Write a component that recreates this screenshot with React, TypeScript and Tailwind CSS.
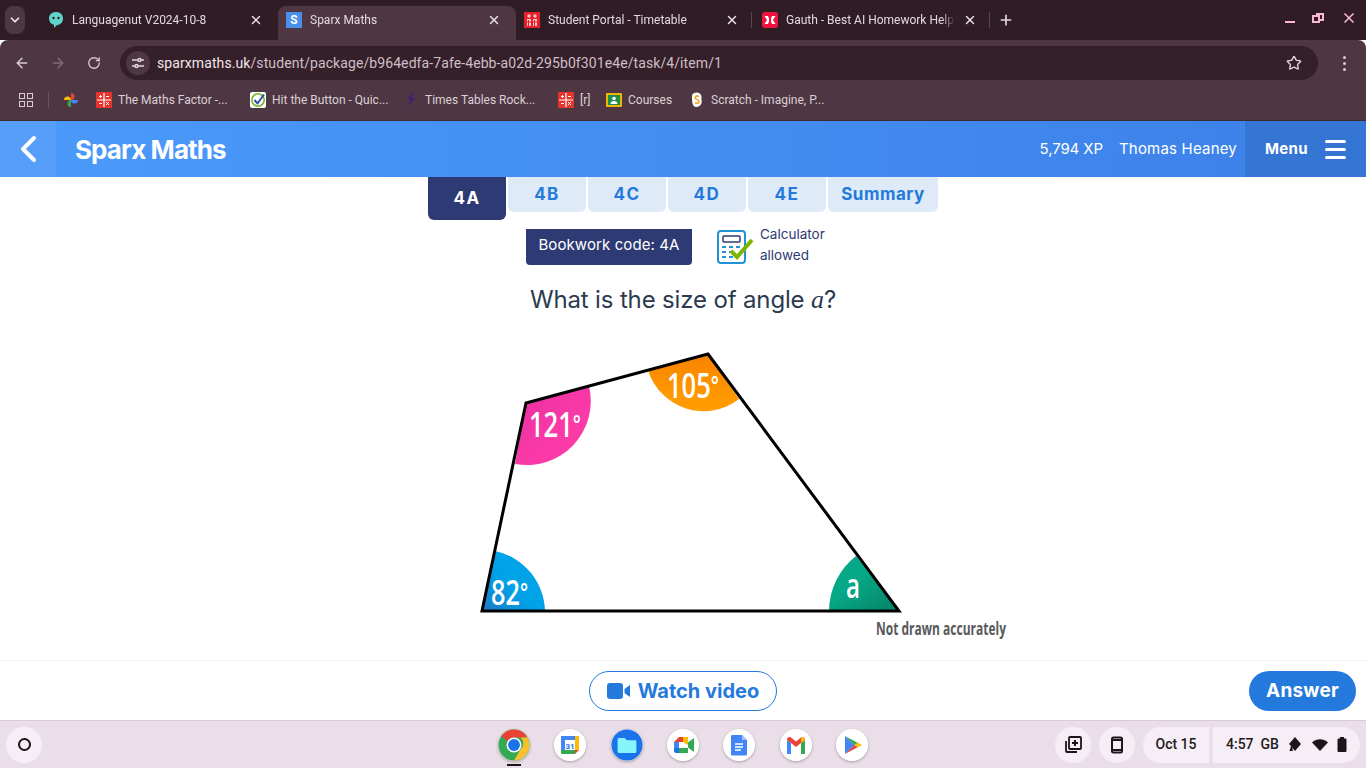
import React from "react";
import { ArrowLeft, ArrowRight, ChevronDown, Plus, RotateCw, Star, X } from "lucide-react";

const roboto = "font-['Roboto',sans-serif]";
const dm = "font-['Inter',sans-serif]";

const LangIcon = () => (
  <svg width="16" height="18" viewBox="0 0 16 18">
    <path d="M8 1c4 0 7 2.600 7 6.500S12 14 9 14l-3 3v-3.300C3 13 1 11 1 7.500 1 3.600 4 1 8 1z" fill="#5fd3c8" />
    <circle cx="5.500" cy="7" r="1.200" fill="#2f1c25" />
    <circle cx="10.500" cy="7" r="1.200" fill="#2f1c25" />
  </svg>
);

const SparxIcon = () => (
  <div className="flex h-4 w-4 items-center justify-center bg-[#4a90e8] text-[12px] font-bold text-white">S</div>
);

const PortalIcon = () => (
  <svg width="16" height="16" viewBox="0 0 16 16">
    <rect width="16" height="16" fill="#e8202c" />
    <circle cx="5" cy="4" r="1.700" fill="#f6c6c6" />
    <circle cx="11" cy="4" r="1.700" fill="#f6c6c6" />
    <path d="M3 7h4v7H3zM9 7h4v7H9z" fill="#f6c6c6" />
    <path d="M4.500 8v6M10.500 8v6M3 10h4M9 10h4" stroke="#e8202c" />
  </svg>
);

const GauthIcon = () => (
  <svg width="16" height="16" viewBox="0 0 16 16">
    <rect width="16" height="16" rx="3" fill="#f0123f" />
    <path d="M2.500 4h3.500l1 2.500V9.500L6 12H2.500l2.500-4zM13.500 4H10L9 6.500v3l1 2.500h3.500L11 8z" fill="#fff" />
  </svg>
);

const MathsFactorIcon = () => (
  <svg width="16" height="16" viewBox="0 0 16 16">
    <rect width="16" height="16" rx="1" fill="#e8342c" />
    <path d="M1 8h14M8 1v14" stroke="#fff" strokeWidth="1.200" />
    <path d="M3 4.500h3M4.500 3v3M10 4.500h3M3 11.500h3M10 10l3 3M13 10l-3 3" stroke="#fff" />
  </svg>
);

const tabs = [
  { title: "Languagenut V2024-10-8", icon: <LangIcon />, active: false, divider: false },
  { title: "Sparx Maths", icon: <SparxIcon />, active: true, divider: false },
  { title: "Student Portal - Timetable", icon: <PortalIcon />, active: false, divider: true },
  { title: "Gauth - Best AI Homework Help", icon: <GauthIcon />, active: false, divider: false },
];

const bookmarks = [
  { label: "The Maths Factor -...", width: "w-[154px]", icon: <MathsFactorIcon /> },
  {
    label: "Hit the Button - Quic...",
    width: "w-[153px]",
    icon: (
      <svg width="16" height="16" viewBox="0 0 16 16">
        <rect width="16" height="16" rx="2" fill="#fff" />
        <circle cx="8" cy="8" r="6.200" fill="none" stroke="#7cb02c" strokeWidth="1.600" />
        <path d="M4.500 8l3 3.500L14 2.500" fill="none" stroke="#2a4fa8" strokeWidth="2" />
      </svg>
    ),
  },
  {
    label: "Times Tables Rock...",
    width: "w-[155px]",
    icon: (
      <svg width="16" height="16" viewBox="0 0 16 16">
        <path d="M11 0L4 6l4 1.500L3 16l9-9.500-4-1z" fill="#3d1d78" />
      </svg>
    ),
  },
  { label: "[r]", width: "w-[48px]", icon: <MathsFactorIcon /> },
  {
    label: "Courses",
    width: "w-[83px]",
    icon: (
      <svg width="16" height="16" viewBox="0 0 16 16">
        <rect x="0" y="1" width="16" height="14" rx="1" fill="#f4b400" />
        <rect x="2" y="3" width="12" height="10" fill="#1f8e4d" />
        <circle cx="8" cy="6.500" r="1.800" fill="#fff" />
        <path d="M4.500 12c0-2 1.500-3 3.500-3s3.500 1 3.500 3z" fill="#fff" />
      </svg>
    ),
  },
  {
    label: "Scratch - Imagine, P...",
    width: "w-[140px]",
    icon: (
      <svg width="16" height="16" viewBox="0 0 16 16">
        <path d="M5 1c3-1.200 6-.5 7 2 .8 2 .3 3.500.6 5.500.4 3-1 6-4.600 6.500C5 15.400 3.500 13 3.300 10 3 7 2 2.200 5 1z" fill="#fff" />
        <path d="M10 4.500C8.500 3.500 6 4 6.300 6c.3 1.800 3.500 1.500 3.700 3.500.2 1.800-2.300 2.300-4 1.200" fill="none" stroke="#f6a21e" strokeWidth="1.600" />
      </svg>
    ),
  },
];

const lessons = ["4B", "4C", "4D", "4E"];

const CalculatorIcon = () => (
  <svg width="38" height="34" viewBox="0 0 38 34">
    <rect x="1" y="1" width="27" height="32" rx="3" fill="#fff" stroke="#1f93d6" strokeWidth="2" />
    <rect x="6" y="6" width="17" height="6" rx="1" fill="#fff" stroke="#2e3a73" strokeWidth="1.500" />
    <path d="M5 17h4M12 17h4M19 17h4M5 22h4M12 22h4M5 27h4M12 27h4" stroke="#1f93d6" strokeWidth="2" />
    <path d="M14 21l6 6L35 10" fill="none" stroke="#7db500" strokeWidth="4" />
  </svg>
);

const Diagram = () => (
  <svg width="560" height="315" viewBox="470 340 560 315" className="block">
    <defs>
      <linearGradient id="blue" x1="0" y1="1" x2="1" y2="0">
        <stop offset="0" stopColor="#1e78c8" />
        <stop offset="0.45" stopColor="#00a3e8" />
      </linearGradient>
      <linearGradient id="green" x1="1" y1="1" x2="0" y2="0">
        <stop offset="0" stopColor="#068266" />
        <stop offset="0.6" stopColor="#06a987" />
      </linearGradient>
      <linearGradient id="orange" x1="0.6" y1="0" x2="0.5" y2="1">
        <stop offset="0" stopColor="#f98200" />
        <stop offset="0.8" stopColor="#ff9a00" />
      </linearGradient>
      <linearGradient id="pink" x1="0" y1="0" x2="1" y2="1">
        <stop offset="0" stopColor="#e72ea0" />
        <stop offset="0.6" stopColor="#fb3aa8" />
      </linearGradient>
    </defs>
    <path d="M482 611L545 611A63 63 0 0 0 495 551Z" fill="url(#blue)" />
    <path d="M899 611L829 611A70 70 0 0 1 856 556Z" fill="url(#green)" />
    <path d="M526 403L589 386A64 64 0 0 1 515 464Z" fill="url(#pink)" />
    <path d="M708 354L648 370A58 58 0 0 0 739 399Z" fill="url(#orange)" />
    <path d="M482 611L526 403L708 354L899 611Z" fill="none" stroke="#000" strokeWidth="3" />
    <g fill="#fff" fontFamily="'Open Sans',sans-serif" fontWeight="600" fontSize="35">
      <text x="529" y="437" textLength="52" lengthAdjust="spacingAndGlyphs">
        121<tspan fontSize="26" dy="-4">°</tspan>
      </text>
      <text x="667" y="398" textLength="52" lengthAdjust="spacingAndGlyphs">
        105<tspan fontSize="26" dy="-4">°</tspan>
      </text>
      <text x="491" y="605" textLength="37" lengthAdjust="spacingAndGlyphs">
        82<tspan fontSize="26" dy="-4">°</tspan>
      </text>
      <text x="846" y="598" textLength="14" lengthAdjust="spacingAndGlyphs">a</text>
    </g>
    <text x="876" y="635" fill="#58595b" fontFamily="'Open Sans',sans-serif" fontWeight="700" fontSize="17" textLength="130" lengthAdjust="spacingAndGlyphs">
      Not drawn accurately
    </text>
  </svg>
);

const apps = [
  <svg key="chrome" width="34" height="34" viewBox="0 0 34 34">
    <circle cx="17" cy="17" r="16.500" fill="#34a853" />
    <path d="M17 .5A16.500 16.500 0 0 1 31.300 9H17a8 8 0 0 0-7 4L3.500 7.500A16.500 16.500 0 0 1 17 .5z" fill="#ea4335" />
    <path d="M31.300 9A16.500 16.500 0 0 1 17 33.500l7-12a8 8 0 0 0 0-12.500z" fill="#fbc02d" />
    <circle cx="17" cy="17" r="8" fill="#fff" />
    <circle cx="17" cy="17" r="6.300" fill="#1a73e8" />
  </svg>,
  <svg key="calendar" width="32" height="32" viewBox="0 0 32 32">
    <circle cx="16" cy="16" r="16" fill="#fff" />
    <rect x="7" y="7" width="18" height="18" rx="1" fill="#fff" />
    <path d="M7 7h18v4H11v10H7z" fill="#4285f4" />
    <path d="M21 7h4v14h-4z" fill="#fbbc04" />
    <path d="M7 21h14v4H8a1 1 0 0 1-1-1z" fill="#34a853" />
    <path d="M21 21h4l-4 4z" fill="#ea4335" />
    <text x="16" y="19.500" textAnchor="middle" fontSize="8" fontWeight="700" fill="#1a73e8" fontFamily="Roboto,sans-serif">31</text>
  </svg>,
  <svg key="files" width="34" height="34" viewBox="0 0 34 34">
    <circle cx="17" cy="17" r="16.500" fill="#1a73e8" />
    <path d="M7 11a1.500 1.500 0 0 1 1.500-1.500h6l2.500 2.500h9.500A1.500 1.500 0 0 1 27 13.500V24a1.500 1.500 0 0 1-1.500 1.500h-17A1.500 1.500 0 0 1 7 24z" fill="#85f5fb" />
  </svg>,
  <svg key="meet" width="32" height="32" viewBox="0 0 32 32">
    <circle cx="16" cy="16" r="16" fill="#fff" />
    <path d="M7 13l5-5h9v5H12v6H7z" fill="#ea4335" />
    <path d="M7 13h5v6H7z" fill="#4285f4" />
    <path d="M7 19h5v5H9a2 2 0 0 1-2-2z" fill="#1a73e8" />
    <path d="M12 19h9v5H12z" fill="#34a853" />
    <path d="M16 8h5v8l-5-3z" fill="#fbbc04" />
    <path d="M21 13.500l6-4.500v14l-6-4.500z" fill="#34a853" />
  </svg>,
  <svg key="docs" width="32" height="32" viewBox="0 0 32 32">
    <circle cx="16" cy="16" r="16" fill="#fff" />
    <path d="M9 6h10l5 5v14a1.500 1.500 0 0 1-1.500 1.500h-13A1.500 1.500 0 0 1 8 25V7.500A1.500 1.500 0 0 1 9 6z" fill="#4285f4" />
    <path d="M19 6l5 5h-5z" fill="#a1c2fa" />
    <path d="M12 15h8M12 18h8M12 21h6" stroke="#fff" strokeWidth="1.500" />
  </svg>,
  <svg key="gmail" width="32" height="32" viewBox="0 0 32 32">
    <circle cx="16" cy="16" r="16" fill="#fff" />
    <path d="M7 25V11l4 3v11z" fill="#4285f4" />
    <path d="M25 25V11l-4 3v11z" fill="#34a853" />
    <path d="M7 11c0-3 2.500-3.500 4-2.500l5 4 5-4c1.500-1 4-.5 4 2.500l-4 3-5 4-5-4z" fill="#ea4335" />
    <path d="M21 8.500c1.500-1 4-.5 4 2.500l-4 3z" fill="#fbbc04" />
  </svg>,
  <svg key="play" width="32" height="32" viewBox="0 0 32 32">
    <circle cx="16" cy="16" r="16" fill="#fff" />
    <path d="M9 7l9.500 9L9 25z" fill="#4285f4" />
    <path d="M9 7l13 7-3.500 2z" fill="#34a853" />
    <path d="M9 25l13-7-3.500-2z" fill="#ea4335" />
    <path d="M21.500 13.500L26 16l-4.500 2.500L18.500 16z" fill="#fbbc04" />
  </svg>,
];

const App: React.FC = () => {
  return (
    <div className="flex h-[768px] w-[1366px] flex-col overflow-hidden bg-white">
      {/* Tab strip */}
      <div className={`flex h-10 shrink-0 items-center bg-[#2f1c25] text-[12px] text-[#e4d8de] ${roboto}`}>
        <div className="ml-[5px] mr-[15px] flex h-7 w-5 items-center justify-center rounded-lg bg-[#4e3742]">
          <ChevronDown size={14} strokeWidth={3} color="#f0e6ea" />
        </div>
        {tabs.map((tab) => (
          <div
            key={tab.title}
            className={`relative flex h-[34px] w-[238px] items-center self-end pb-[6px] pl-2 pr-[15px] ${
              tab.active ? "rounded-t-lg bg-[#4e3742]" : ""
            }`}
          >
            <div className="flex w-4 shrink-0 justify-center">{tab.icon}</div>
            <span className="ml-2 flex-1 overflow-hidden whitespace-nowrap [mask-image:linear-gradient(to_right,black_92%,transparent)]">
              {tab.title}
            </span>
            <X size={14} strokeWidth={2.5} color="#eadfe4" className="ml-2 shrink-0" />
            {tab.divider && <div className="absolute right-[2px] top-[6px] h-4 w-px bg-[#5c4652]" />}
          </div>
        ))}
        <div className="ml-[-3px] h-4 w-px bg-[#5c4652]" />
        <Plus size={16} strokeWidth={2.5} color="#e4d8de" className="ml-[8px]" />
        <div className="ml-auto mr-[9px] flex items-center gap-[17px]">
          <div className="mt-1 h-[2px] w-[10px] bg-[#f8b8d4]" />
          <div className="relative mb-1 h-[10px] w-3">
            <div className="absolute right-0 top-0 h-2 w-2 border-2 border-[#f8b8d4]" />
            <div className="absolute bottom-0 left-0 h-2 w-2 border-2 border-[#f8b8d4] bg-[#2f1c25]" />
          </div>
          <X size={16} strokeWidth={2.5} color="#f8b8d4" className="mb-1" />
        </div>
      </div>

      {/* Toolbar */}
      <div className={`h-[81px] shrink-0 rounded-t-lg border-b border-[#3d2b34] bg-[#4e3742] ${roboto}`}>
        <div className="flex h-10 items-end pl-[14px]">
          <div className="flex h-[34px] items-center">
            <ArrowLeft size={16} strokeWidth={2.2} color="#d9ccd3" />
            <ArrowRight size={16} strokeWidth={2.2} color="#826e78" className="ml-5" />
            <RotateCw size={14} strokeWidth={2.2} color="#d9ccd3" className="ml-[21px]" />
          </div>
          <div className="ml-[19px] flex h-[34px] w-[1198px] items-center rounded-full bg-[#35202a] pl-[6px] pr-[16px]">
            <div className="flex h-6 w-6 items-center justify-center rounded-full bg-[#4e3742]">
              <svg width="14" height="14" viewBox="0 0 14 14" fill="none" stroke="#e4d8de" strokeWidth="1.400">
                <path d="M1 4h6M10 4h3M1 10h3M7 10h6" />
                <circle cx="8.500" cy="4" r="1.500" />
                <circle cx="5.500" cy="10" r="1.500" />
              </svg>
            </div>
            <span className="ml-[7px] text-[14px] tracking-[0.09px] text-[#f0e6ea]">
              sparxmaths.uk<span className="text-[#cdbfc7]">/student/package/b964edfa-7afe-4ebb-a02d-295b0f301e4e/task/4/item/1</span>
            </span>
            <Star size={16} strokeWidth={2} color="#e4d8de" className="ml-auto" />
          </div>
          <div className="ml-[25px] flex h-[34px] flex-col items-center justify-center gap-[3px]">
            <div className="h-[3px] w-[3px] rounded-full bg-[#d9ccd3]" />
            <div className="h-[3px] w-[3px] rounded-full bg-[#d9ccd3]" />
            <div className="h-[3px] w-[3px] rounded-full bg-[#d9ccd3]" />
          </div>
        </div>
        <div className="flex h-10 items-center pl-[19px] text-[12px] text-[#dccfd6]">
          <div className="grid h-[14px] w-[14px] grid-cols-2 gap-[2px]">
            <div className="border-[1.5px] border-[#d9ccd3]" />
            <div className="border-[1.5px] border-[#d9ccd3]" />
            <div className="border-[1.5px] border-[#d9ccd3]" />
            <div className="border-[1.5px] border-[#d9ccd3]" />
          </div>
          <div className="ml-[15px] h-4 w-px bg-[#6a5460]" />
          <svg width="16" height="16" viewBox="0 0 16 16" className="ml-[14px] mr-[17px]">
            <path d="M8 8H1a3.500 3.500 0 0 1 7 0z" fill="#fbbc04" />
            <path d="M8 8H1a3.500 3.500 0 0 1 7 0z" fill="#ea4335" transform="rotate(90 8 8)" />
            <path d="M8 8H1a3.500 3.500 0 0 1 7 0z" fill="#4285f4" transform="rotate(180 8 8)" />
            <path d="M8 8H1a3.500 3.500 0 0 1 7 0z" fill="#34a853" transform="rotate(270 8 8)" />
          </svg>
          {bookmarks.map((b) => (
            <div key={b.label} className={`flex items-center gap-[6px] whitespace-nowrap ${b.width}`}>
              <div className="w-4 shrink-0">{b.icon}</div>
              <span>{b.label}</span>
            </div>
          ))}
        </div>
      </div>

      {/* Sparx header */}
      <div className={`flex h-14 shrink-0 items-center bg-gradient-to-r from-[#4b9afa] to-[#3c80e8] text-white ${dm}`}>
        <div className="flex h-full w-14 items-center justify-center bg-[#559ffb]">
          <svg width="20" height="28" viewBox="0 0 20 28" fill="none" stroke="#fff" strokeWidth="4" strokeLinecap="round" strokeLinejoin="round">
            <path d="M16 3L5 14l11 11" />
          </svg>
        </div>
        <span className="ml-[19px] text-[26px] font-bold tracking-[-0.9px]">Sparx Maths</span>
        <span className="ml-auto text-[15px] tracking-[-0.1px]">5,794 XP</span>
        <span className="ml-4 text-[15px] tracking-[0.2px]">Thomas Heaney</span>
        <div className="ml-2 flex h-full w-[121px] items-center bg-[#3575d3] pl-5">
          <span className="text-[15px] font-bold tracking-[0.3px]">Menu</span>
          <div className="ml-[17px] flex w-[21px] flex-col gap-[5px]">
            <div className="h-[3px] rounded-full bg-white" />
            <div className="h-[3px] rounded-full bg-white" />
            <div className="h-[3px] rounded-full bg-white" />
          </div>
        </div>
      </div>

      {/* Question */}
      <div className={`flex min-h-0 flex-1 flex-col items-center ${dm}`}>
        <div className="flex h-[43px] w-[510px] shrink-0 items-start gap-[2px]">
          <div className="flex h-[43px] w-[78px] items-center justify-center rounded-b-md bg-[#2e3a73] text-[17px] font-bold tracking-[1.5px] text-white">
            4A
          </div>
          {lessons.map((l) => (
            <div key={l} className="flex h-[35px] w-[78px] items-center justify-center rounded-b-md bg-[#deeaf7] text-[17px] font-bold tracking-[1.5px] text-[#2479dc]">
              {l}
            </div>
          ))}
          <div className="flex h-[35px] w-[110px] items-center justify-center rounded-b-md bg-[#deeaf7] text-[17px] font-bold tracking-[0.5px] text-[#2479dc]">
            Summary
          </div>
        </div>
        <div className="mt-[9px] flex h-9 w-[314px] shrink-0 items-center">
          <div className="flex h-9 w-[166px] items-center justify-center rounded-b-sm bg-[#2e3a73] pb-1 text-[15px] tracking-[0.1px] text-white">
            Bookwork code: 4A
          </div>
          <div className="ml-[25px] w-[36px]">
            <CalculatorIcon />
          </div>
          <div className="mb-1 ml-[7px] text-[13.500px] leading-[21px] text-[#2e3a73]">
            Calculator
            <br />
            allowed
          </div>
        </div>
        <p className="mt-[19px] text-[24px] leading-[32px] tracking-[-0.15px] text-[#2c3a50]">
          What is the size of angle <span className="font-['Liberation_Serif',serif] text-[26px] italic">a</span>?
        </p>
        <div className="ml-[470px] mt-[24px] self-start">
          <Diagram />
        </div>
      </div>

      {/* Footer actions */}
      <div className={`grid h-[60px] shrink-0 grid-cols-3 items-center border-t border-[#eef4fb] ${dm}`}>
        <div />
        <div className="flex h-10 w-[188px] items-center justify-center gap-2 justify-self-center rounded-full border border-[#2479dc] pt-[1px] text-[20px] font-bold text-[#2479dc]">
          <svg width="23" height="16" viewBox="0 0 23 16">
            <rect width="16" height="16" rx="3" fill="#2479dc" />
            <path d="M17.500 6L23 2v12l-5.500-4z" fill="#2479dc" />
          </svg>
          Watch video
        </div>
        <div className="mr-[10px] flex h-10 w-[107px] items-center justify-center justify-self-end rounded-full bg-[#2479dc] pt-[2px] text-[19px] font-bold tracking-[0.2px] text-white">
          Answer
        </div>
      </div>

      {/* ChromeOS shelf */}
      <div className={`grid h-12 shrink-0 grid-cols-[1fr_auto_1fr] items-center border-t border-[#d6ccd5] bg-[#eadfe9] text-[14px] font-medium text-[#241a20] ${roboto}`}>
        <div className="pl-[6px]">
          <div className="flex h-9 w-9 items-center justify-center rounded-full bg-[#f5eef6]">
            <div className="h-[13px] w-[13px] rounded-full border-2 border-[#1c1418]" />
          </div>
        </div>
        <div className="flex items-center gap-[24.300px]">
          {apps.map((app, i) => (
            <div key={i} className="relative flex h-8 w-8 items-center justify-center rounded-full shadow-[0_1px_3px_rgba(0,0,0,0.3)]">
              {app}
              {i === 0 && <div className="absolute -bottom-[5px] left-[9px] h-[2px] w-[14px] bg-[#1c1418]" />}
            </div>
          ))}
        </div>
        <div className="flex items-center justify-end pr-[6px]">
          <div className="flex h-9 w-9 items-center justify-center rounded-full bg-[#f5eef6]">
            <svg width="20" height="20" viewBox="0 0 20 20" fill="none" stroke="#1c1418" strokeWidth="1.800">
              <rect x="6" y="2" width="12" height="12" rx="1" />
              <path d="M3 6v10a1 1 0 0 0 1 1h10" />
              <path d="M9 8h6M12 5v6" strokeWidth="2" />
            </svg>
          </div>
          <div className="ml-2 flex h-9 w-9 items-center justify-center rounded-full bg-[#f5eef6]">
            <svg width="18" height="18" viewBox="0 0 18 18" fill="none" stroke="#1c1418" strokeWidth="2">
              <rect x="4" y="1.500" width="10" height="15" rx="1.500" />
              <path d="M4 4h10M4 14h10" />
            </svg>
          </div>
          <div className="ml-2 flex h-9 w-[66px] items-center justify-center rounded-l-full rounded-r-[4px] bg-[#f5eef6]">Oct 15</div>
          <div className="ml-1 flex h-9 w-[147px] items-center rounded-l-[4px] rounded-r-full bg-[#f5eef6] pl-[13px]">
            <span>4:57</span>
            <span className="ml-[7px]">GB</span>
            <svg width="14" height="16" viewBox="0 0 14 16" className="ml-[9px]" fill="#1c1418">
              <path d="M7 0l6 7-6 7-3-3.500 1 3.500H1.500L3 9 1 7z" />
            </svg>
            <svg width="16" height="12" viewBox="0 0 16 12" className="ml-[10px]" fill="#1c1418">
              <path d="M0 3.500C4.500-.8 11.500-.8 16 3.500L8 12z" />
            </svg>
            <svg width="10" height="15" viewBox="0 0 10 15" className="ml-[9px]" fill="#1c1418">
              <path d="M3 0h4v1.500h1.500a1 1 0 0 1 1 1V14a1 1 0 0 1-1 1h-7a1 1 0 0 1-1-1V2.500a1 1 0 0 1 1-1H3z" />
            </svg>
          </div>
        </div>
      </div>
    </div>
  );
};

export default App;
